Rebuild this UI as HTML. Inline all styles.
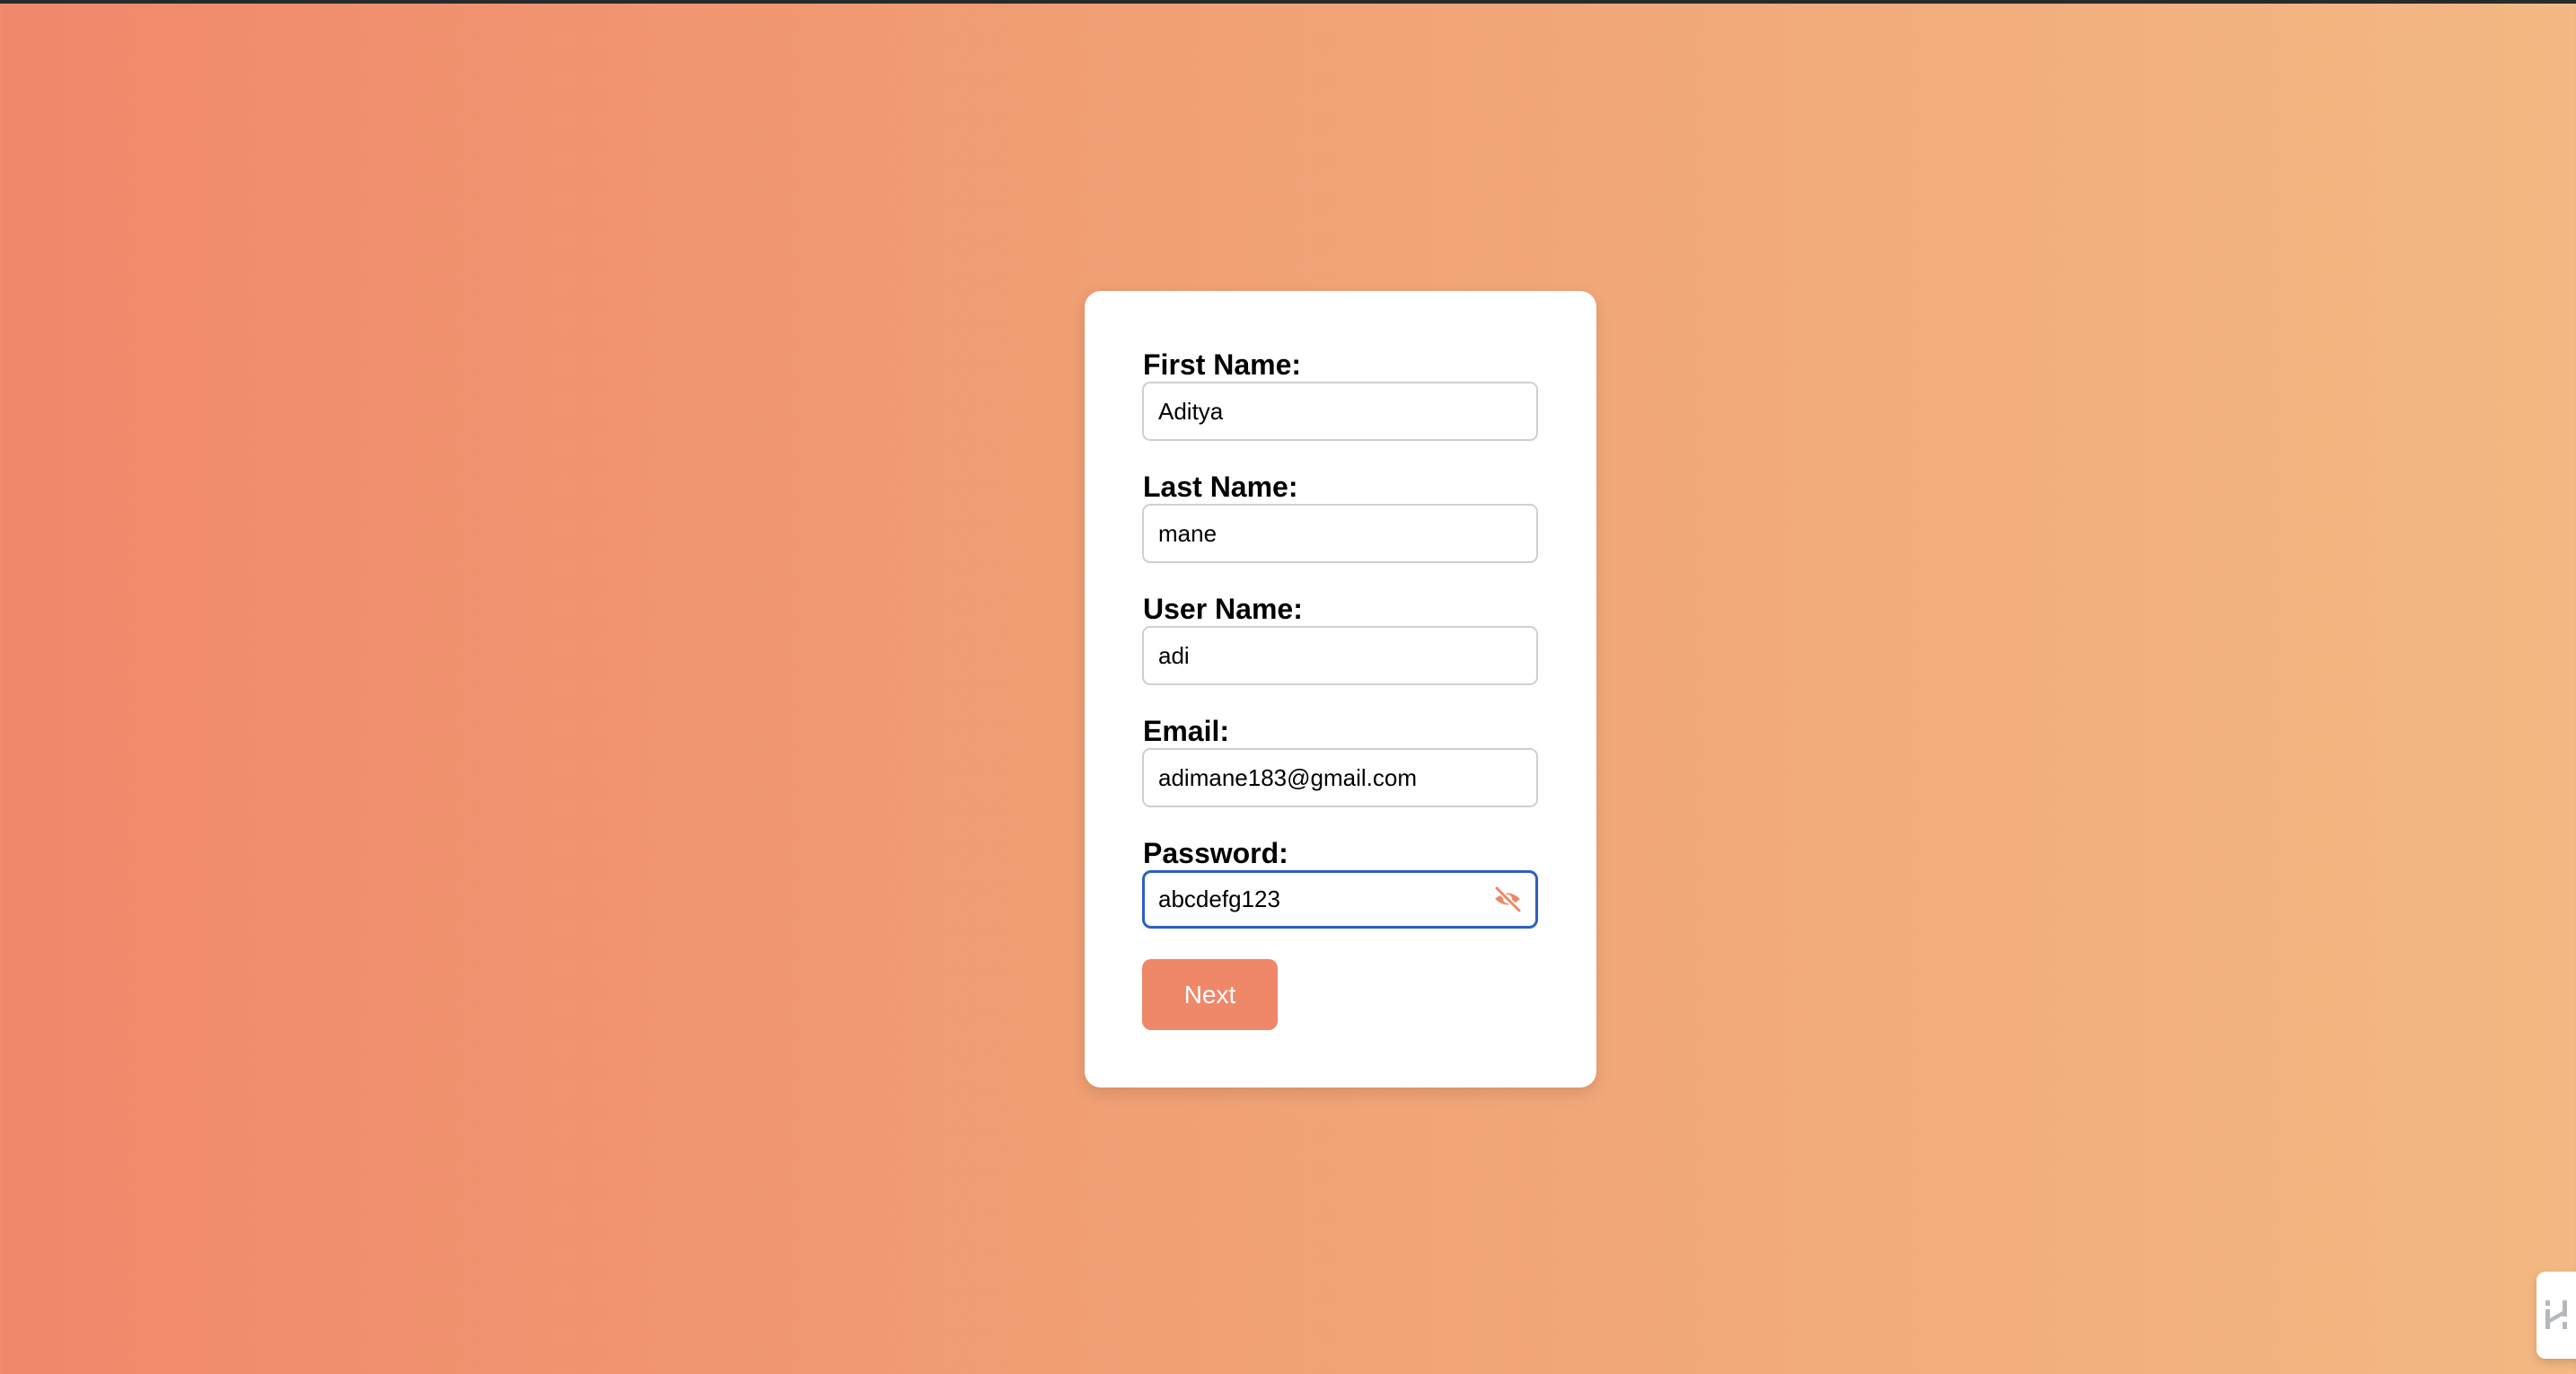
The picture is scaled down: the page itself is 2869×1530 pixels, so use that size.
<!DOCTYPE html>
<html><head><meta charset="utf-8"><style>
html,body{margin:0;padding:0}
body{width:2869px;height:1530px;position:relative;overflow:hidden;font-family:"Liberation Sans",Arial,sans-serif;background:linear-gradient(90deg,#f0886b 0%,#f1a074 45%,#f3b883 100%)}
.top{position:absolute;left:0;top:0;width:100%;height:4px;background:#262b2b}
.card{position:absolute;left:1208px;top:324px;width:570px;height:887px;background:#fff;border-radius:18px;box-shadow:0 6px 18px rgba(0,0,0,.12)}
.lbl{position:absolute;left:1273px;font-weight:bold;font-size:32px;line-height:32px;color:#000}
.inp{position:absolute;left:1272px;width:437px;height:62px;border:2px solid #cfcfcf;border-radius:9px;background:#fff;box-sizing:content-box}
.inp span{position:absolute;left:16px;top:0;line-height:62px;font-size:26px;color:#000}
.pw{border:3px solid #2b5fc7;width:435px;height:59px;border-radius:10px}
.pw span{left:15px;line-height:59px}
.btn{position:absolute;left:1272px;top:1068px;width:151px;height:79px;background:#ef8769;border-radius:10px;color:#fff;font-size:28px;line-height:79px;text-align:center}
.wid{position:absolute;left:2825px;top:1416px;width:60px;height:97px;background:#fff;border-radius:10px;box-shadow:0 4px 10px rgba(0,0,0,.15)}
</style></head><body>
<div class="top"></div>
<div class="card"></div>
<div class="lbl" style="top:390px">First Name:</div>
<div class="inp" style="top:425px"><span>Aditya</span></div>
<div class="lbl" style="top:526px">Last Name:</div>
<div class="inp" style="top:561px"><span>mane</span></div>
<div class="lbl" style="top:662px">User Name:</div>
<div class="inp" style="top:697px"><span>adi</span></div>
<div class="lbl" style="top:798px">Email:</div>
<div class="inp" style="top:833px"><span>adimane183@gmail.com</span></div>
<div class="lbl" style="top:934px">Password:</div>
<div class="inp pw" style="top:969px"><span>abcdefg123</span>
<svg style="position:absolute;left:387px;top:14px" width="34" height="30" viewBox="0 0 34 30">
<path d="M3 15 Q17 2 31 15 Q17 28 3 15Z" fill="#ef8769"/>
<circle cx="17" cy="15" r="5" fill="#fff"/>
<line x1="5" y1="3" x2="30" y2="28" stroke="#fff" stroke-width="6"/>
<line x1="5" y1="3" x2="30" y2="28" stroke="#ef8769" stroke-width="3" stroke-linecap="round"/>
</svg></div>
<div class="btn">Next</div>
<div class="wid"><svg style="position:absolute;left:8px;top:30px" width="30" height="36" viewBox="0 0 30 36">
<g fill="#b5b8bd"><rect x="2" y="2" width="5" height="6"/><rect x="2" y="12" width="5" height="22"/><rect x="21" y="2" width="5" height="18"/><rect x="21" y="26" width="5" height="8"/><polygon points="7,22 21,14 21,19 7,27"/></g></svg></div>
</body></html>
